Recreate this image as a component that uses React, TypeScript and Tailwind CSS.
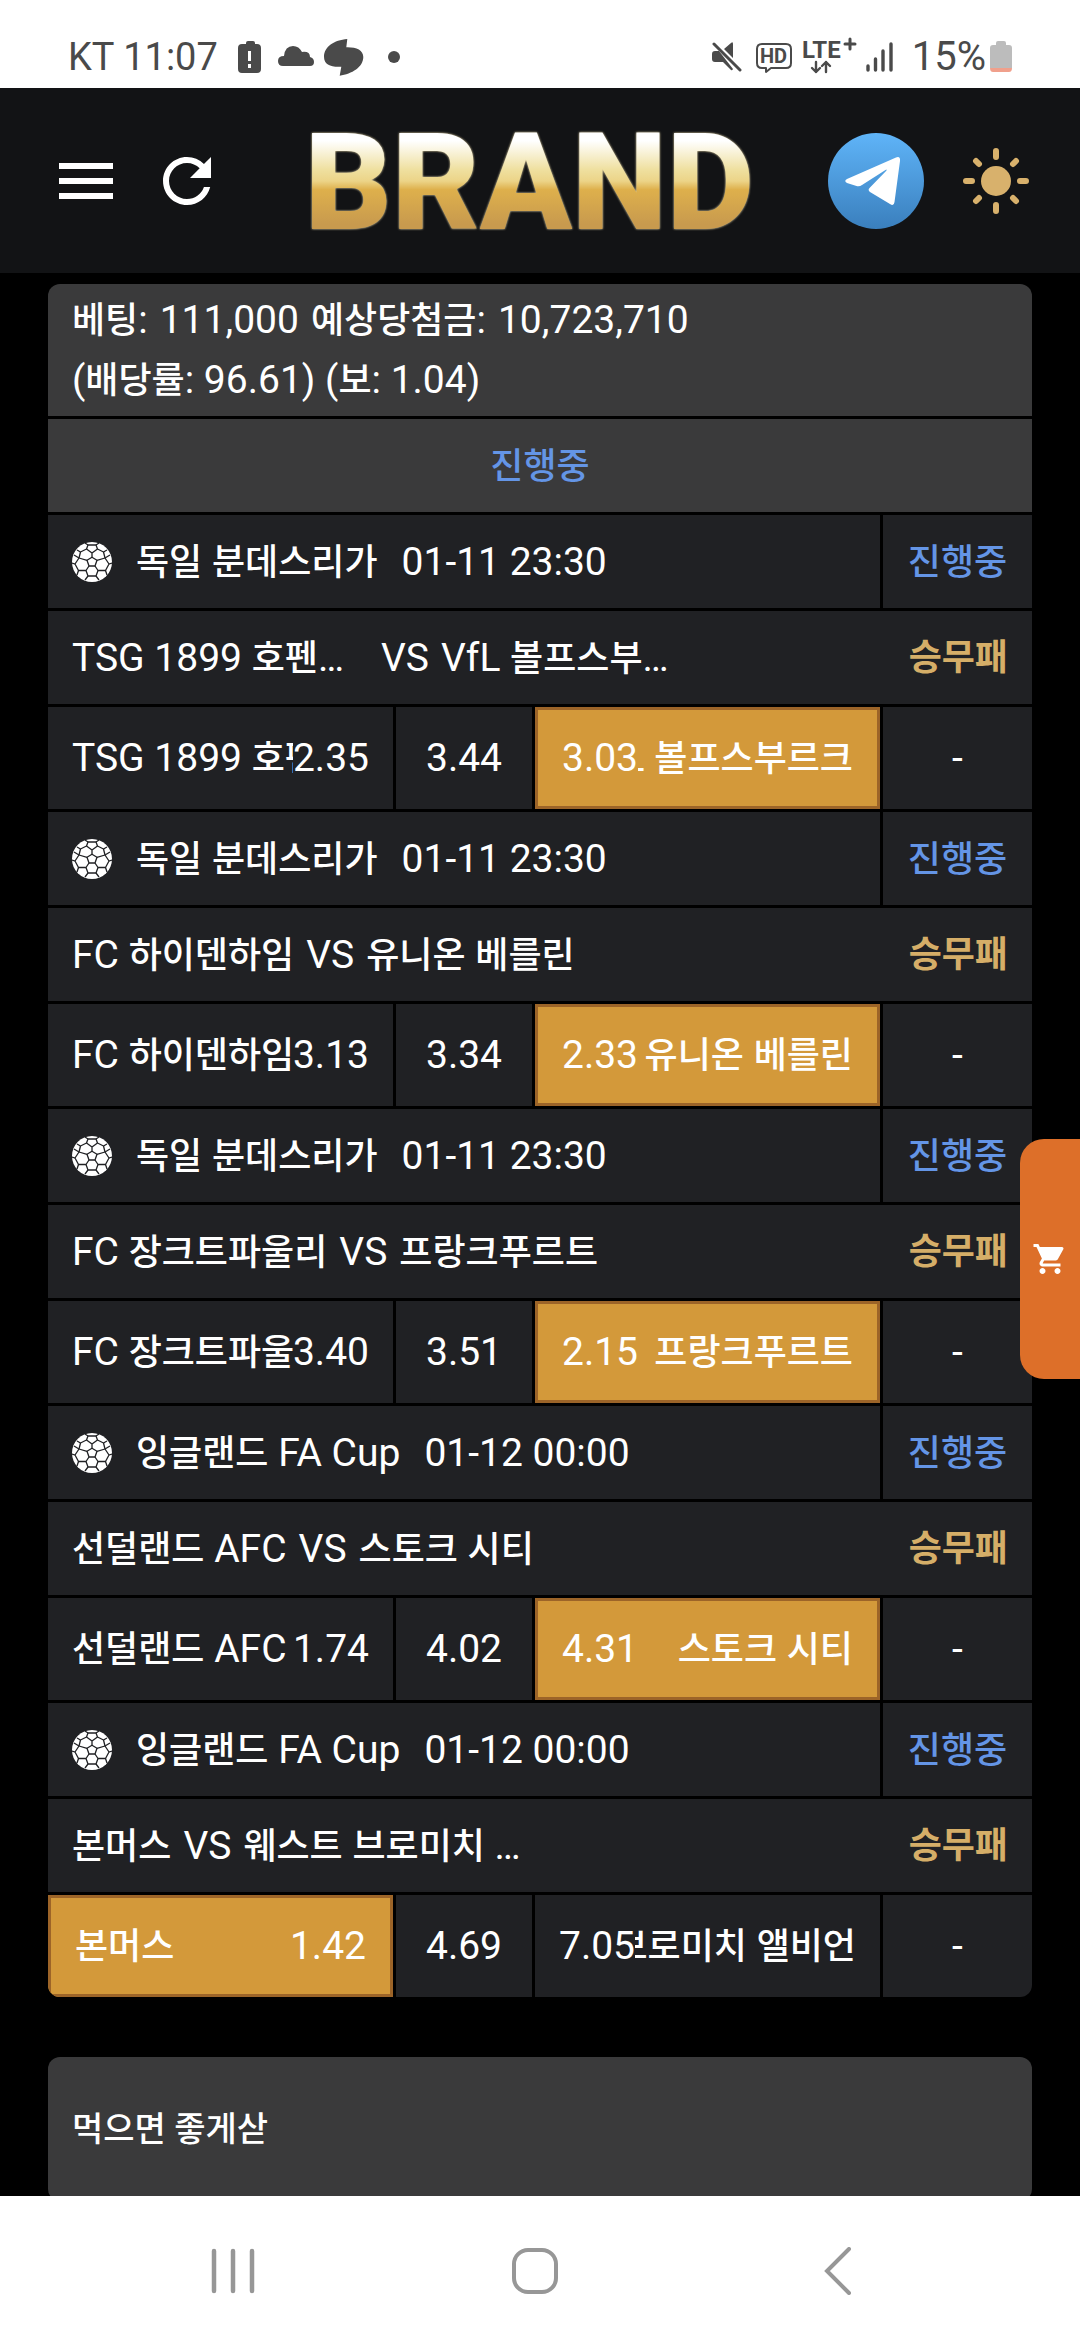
import React from 'react';
import { MdMenu, MdRefresh, MdShoppingCart } from 'react-icons/md';

type Pick = 'home' | 'draw' | 'away';

interface Match {
  id: number;
  league: string;
  time: string;
  home: string;
  away: string;
  awayLabel?: string;
  odds: [string, string, string];
  pick: Pick;
}

const MATCHES: Match[] = [
  { id: 1, league: '독일 분데스리가', time: '01-11 23:30', home: 'TSG 1899 호펜하임', away: 'VfL 볼프스부르크', awayLabel: 'VfL 볼프스부…', odds: ['2.35', '3.44', '3.03'], pick: 'away' },
  { id: 2, league: '독일 분데스리가', time: '01-11 23:30', home: 'FC 하이덴하임', away: '유니온 베를린', odds: ['3.13', '3.34', '2.33'], pick: 'away' },
  { id: 3, league: '독일 분데스리가', time: '01-11 23:30', home: 'FC 장크트파울리', away: '프랑크푸르트', odds: ['3.40', '3.51', '2.15'], pick: 'away' },
  { id: 4, league: '잉글랜드 FA Cup', time: '01-12 00:00', home: '선덜랜드 AFC', away: '스토크 시티', odds: ['1.74', '4.02', '4.31'], pick: 'away' },
  { id: 5, league: '잉글랜드 FA Cup', time: '01-12 00:00', home: '본머스', away: '웨스트 브로미치 앨비언', awayLabel: '웨스트 브로미치 …', odds: ['1.42', '4.69', '7.05'], pick: 'home' },
];

// Hangul glyphs run wide next to Roboto, so they are set one step smaller
const Ko: React.FC<{ children: string }> = ({ children }) => (
  <>
    {children.split(/([가-힣]+)/).map((part, i) =>
      i % 2 ? <span key={i} className="text-[36px] font-medium leading-none">{part}</span> : part
    )}
  </>
);

const SoccerBall = () => (
  <svg viewBox="0 0 40 40" className="h-10 w-10 shrink-0" aria-hidden="true">
    <circle cx="20" cy="20" r="20" fill="#fff" />
    <g fill="none" stroke="#202124" strokeWidth="1.3" strokeLinejoin="round">
      <path d="M20 15.300l5 3-2 5.700h-6l-2-5.700z" />
      <path d="M20 15.300V11L14.500 7l-6 3L7 16l8 2.300M20 11l5.500-4 6 3 1.500 6-8 2.300" />
      <path d="M7 16l-4 6 3.500 6.500H14l3-4.500M33 16l4 6-3.500 6.500H26L23 24" />
      <path d="M14 28.500l2 5.500h8l2-5.500" />
      <path d="M14.500 7L16 3h8l1.500 4M16 3l-3-2M24 3l3-2M8.500 10L5 8M31.500 10L35 8M3 22l-3-1M37 22l3-1M6.500 28.500L5 33M33.500 28.500L35 33M16 34l-3 4M24 34l3 4" />
      <path d="M2 13l5 3M38 13l-5 3" />
    </g>
  </svg>
);

const StatusBar = () => (
  <div className="flex h-[88px] shrink-0 items-center justify-between bg-white px-[68px] pt-[26px] leading-[60px] text-[#4a4a4a]">
    <div className="flex items-center">
      <span className="text-[38px]">KT 11:07</span>
      <svg viewBox="0 -4 164 40" className="ml-5 h-10 w-[164px]" fill="#4a4a4a" aria-hidden="true">
        <path d="M8 3V2q0-2 2-2h5q2 0 2 2v1h2q4 0 4 4v21q0 4-4 4H4q-4 0-4-4V7q0-4 4-4z" />
        <path d="M10 10h3v10h-3zM10 23h3v4h-3z" fill="#fff" />
        <path d="M45 25q-5 0-5-5t6-5q1-10 9-10 6 0 9 6 8-1 8 5 4 1 4 5 0 4-4 4z" />
        <path d="M109.300-2C96-1 86 6 86 15.700c0 8 7 10.600 17.300 10l-1.600 9C114 33 125.300 26 125.300 16c0-7-7.300-10-17-9.700z" />
        <circle cx="156" cy="16" r="6" />
      </svg>
    </div>
    <div className="flex items-center">
      <svg viewBox="0 -4 184 40" className="mr-4 h-10 w-[184px]" aria-hidden="true">
        <g fill="#4a4a4a">
          <path d="M0 13q0-3 3-3h4l14 18q-1 2-2 1l-8-8H3q-3 0-3-3zM12 8l7-6q2-2 2 1v14z" />
          <path d="M2 3l26 26" stroke="#4a4a4a" strokeWidth="3" strokeLinecap="round" />
          <path d="M156 25v4M163.500 18v11M171 10v19M179 3v26" stroke="#4a4a4a" strokeWidth="3.400" strokeLinecap="round" />
          <text x="48" y="22" fontSize="20" fontWeight="700">HD</text>
          <text x="90" y="17" fontSize="24" fontWeight="700">LTE</text>
        </g>
        <g fill="none" stroke="#4a4a4a" strokeWidth="2.400" strokeLinecap="round" strokeLinejoin="round">
          <path d="M50 3h24q5 0 5 5v14q0 5-5 5H59l-5 4v-4h-4q-5 0-5-5V8q0-5 5-5z" strokeWidth="2" />
          <path d="M138-2v10M133 3h10" strokeWidth="3" />
          <path d="M104 21v10M100 27l4 4 4-4M114 31V21M110 25l4-4 4 4" />
        </g>
      </svg>
      <span className="text-[40px]">15%</span>
      <svg viewBox="0 0 22 32" className="ml-1 h-8 w-[22px]" aria-hidden="true">
        <path d="M6 4V2q0-2 2-2h6q2 0 2 2v2h3q3 0 3 3v20H0V7q0-3 3-3z" fill="#bcbcbc" />
        <path d="M0 27h22q0 4-3 4H3q-3 0-3-4z" fill="#f0a08c" />
      </svg>
    </div>
  </div>
);

const Header = () => (
  <header className="flex h-[185px] shrink-0 items-center justify-between bg-[#121315] pl-[50px] pr-12">
    <div className="flex items-center gap-[29px] pr-2 text-white">
      <button type="button" aria-label="메뉴">
        <MdMenu className="h-[72px] w-[72px]" />
      </button>
      <button type="button" aria-label="새로고침">
        <MdRefresh className="h-[72px] w-[72px]" />
      </button>
    </div>
    <h1 className="bg-[linear-gradient(180deg,#fff_22%,#efe0a0_42%,#ecd488_50%,#deb04c_56%,#c89a4e_80%)] bg-clip-text pt-1 text-[135px] font-black leading-[140px] text-transparent drop-shadow-[0_0_1px_#f7e7b4]">
      BRAND
    </h1>
    <div className="flex items-center gap-9">
      <a href="#telegram" aria-label="텔레그램">
        <svg viewBox="0 0 96 96" className="h-24 w-24">
          <defs>
            <linearGradient id="tg" x1="0" y1="0" x2="0" y2="1">
              <stop offset="0" stopColor="#5fb4f8" />
              <stop offset="1" stopColor="#3a7fbd" />
            </linearGradient>
          </defs>
          <circle cx="48" cy="48" r="48" fill="url(#tg)" />
          <path
            d="M19 46L68 24.500q4.500-1.700 4 3.500l-5.500 41q-.5 4.500-4.500 2L42 59q-2.500-2-.5-4l17-17.500q.5-1.500-1-.5L34 52q-2.500 1.800-5.500 1L19 50q-3.500-2 0-4z"
            fill="#fff"
          />
        </svg>
      </a>
      <button type="button" aria-label="밝은 화면">
        <svg viewBox="-36 -36 72 72" className="h-[72px] w-[72px]" fill="#d8b16c" stroke="#d8b16c" strokeWidth="6" strokeLinecap="round">
          <circle r="15" stroke="none" />
          <path d="M0-30v6M0 30v-6M-30 0h6M30 0h-6M-20-20l3 3M20-20l-3 3M-20 20l3-3M20 20l-3-3" />
        </svg>
      </button>
    </div>
  </header>
);

interface OddsCellProps {
  selected: boolean;
  children: React.ReactNode;
}

const OddsCell: React.FC<OddsCellProps> = ({ selected, children }) => (
  <div
    className={
      selected
        ? 'flex min-w-0 items-center border-[3px] border-[#9c6428] bg-[#d3993a] px-6'
        : 'flex min-w-0 items-center bg-[#202124] px-6'
    }
  >
    {children}
  </div>
);

const MatchRows: React.FC<{ match: Match }> = ({ match }) => (
  <>
    <div className="grid min-h-[93px] grid-cols-[1fr_149px] gap-[3px]">
      <div className="flex items-center gap-6 bg-[#202124] px-6">
        <SoccerBall />
        <span><Ko>{match.league}</Ko></span>
        <span>{match.time}</span>
      </div>
      <div className="flex items-center justify-center bg-[#202124] text-[#6495e6]">
        <span><Ko>진행중</Ko></span>
      </div>
    </div>

    <div className="flex min-h-[93px] items-center justify-between bg-[#202124] px-6">
      <div className="flex items-center gap-3 whitespace-nowrap">
        <span className="max-w-[297px] truncate"><Ko>{match.home}</Ko></span>
        <span>VS</span>
        <span><Ko>{match.awayLabel ?? match.away}</Ko></span>
      </div>
      <strong className="text-[36px] font-bold text-[#d5ae68]">승무패</strong>
    </div>

    <div className="grid min-h-[102px] grid-cols-[1fr_136px_1fr_149px] gap-[3px]">
      <OddsCell selected={match.pick === 'home'}>
        <span className="min-w-0 flex-1 overflow-hidden whitespace-nowrap"><Ko>{match.home}</Ko></span>
        <span>{match.odds[0]}</span>
      </OddsCell>
      <div className="flex items-center justify-center bg-[#202124]">{match.odds[1]}</div>
      <OddsCell selected={match.pick === 'away'}>
        <span>{match.odds[2]}</span>
        <span className="flex min-w-0 flex-1 justify-end overflow-hidden whitespace-nowrap">
          <span className="shrink-0"><Ko>{match.away}</Ko></span>
        </span>
      </OddsCell>
      <div className="flex items-center justify-center bg-[#202124]">-</div>
    </div>
  </>
);

const NavBar = () => (
  <nav className="flex h-36 shrink-0 items-center justify-around bg-white pl-[82px] pr-[92px] pt-1.5">
    <button type="button" aria-label="최근 앱">
      <svg viewBox="0 0 48 48" className="h-12 w-12" stroke="#979797" strokeWidth="4.500" strokeLinecap="round">
        <path d="M5 4v40M24 4v40M43 4v40" />
      </svg>
    </button>
    <button type="button" aria-label="홈">
      <svg viewBox="0 0 48 48" className="h-12 w-12" fill="none" stroke="#979797" strokeWidth="4">
        <rect x="3" y="3" width="42" height="42" rx="14" />
      </svg>
    </button>
    <button type="button" aria-label="뒤로">
      <svg viewBox="0 0 48 48" className="h-12 w-12" fill="none" stroke="#979797" strokeWidth="4" strokeLinecap="round">
        <path d="M36 2L14 24l22 22" />
      </svg>
    </button>
  </nav>
);

export default function App() {
  return (
    <div
      lang="ko"
      className="flex h-screen flex-col bg-black text-[39px] leading-[60px] text-white [font-family:Roboto,'Noto_Sans_CJK_KR',sans-serif]"
    >
      <StatusBar />
      <Header />

      <main className="min-h-0 flex-1 overflow-hidden px-12 pt-[11px]">
        {/* Bet slip */}
        <section className="flex flex-col gap-[3px] overflow-hidden rounded-xl">
          <div className="bg-[#3a3a3b] px-6 py-1.5">
            <p className="flex flex-wrap gap-x-3">
              <span className="flex gap-x-3"><span><Ko>베팅:</Ko></span> 111,000</span>
              <span className="flex gap-x-3"><span><Ko>예상당첨금:</Ko></span> 10,723,710</span>
            </p>
            <p><Ko>(배당률: 96.61) (보: 1.04)</Ko></p>
          </div>
          <div className="flex min-h-[93px] items-center justify-center bg-[#3a3a3b] text-[#6495e6]">
            <span><Ko>진행중</Ko></span>
          </div>
          {MATCHES.map((match) => (
            <MatchRows key={match.id} match={match} />
          ))}
        </section>

        {/* Comment */}
        <section className="mt-[60px] rounded-xl bg-[#3a3a3b] px-6 py-[42px]">
          <p className="text-[34px] font-medium">먹으면 좋게삳</p>
        </section>
      </main>

      <NavBar />

      <button
        type="button"
        aria-label="장바구니"
        className="fixed right-0 top-[1139px] flex h-60 w-[60px] items-center justify-center rounded-l-3xl bg-[#dd6f29] text-white"
      >
        <MdShoppingCart className="h-9 w-9" />
      </button>
    </div>
  );
}
